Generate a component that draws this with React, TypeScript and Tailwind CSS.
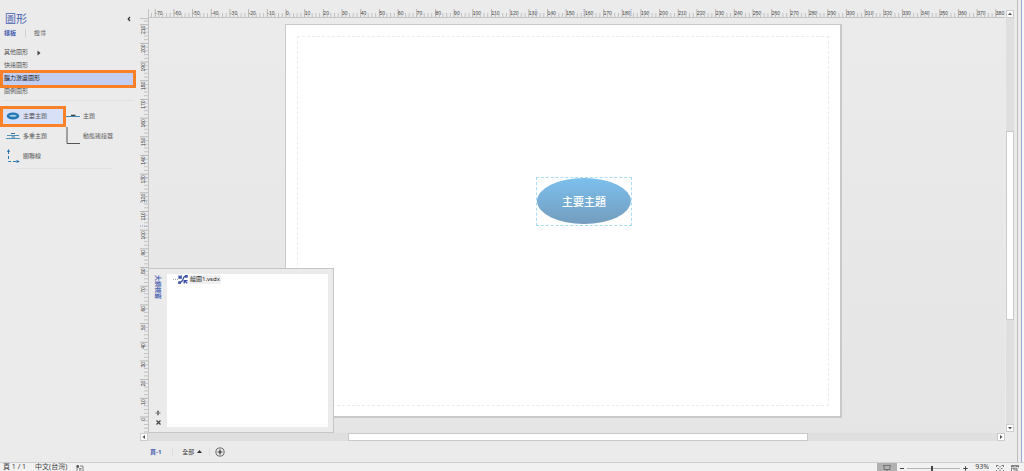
import React from "react";

const STEP = 18.68;

type RulerProps = { origin: number; from: number; to: number; marks: number[] };

function HorizontalRuler({ origin, from, to, marks }: RulerProps) {
  const ticks: React.ReactNode[] = [];
  for (let v = from; v <= to; v += 2) {
    const x = origin + (v / 10) * STEP;
    const major = v % 10 === 0;
    ticks.push(
      <line key={v} x1={x} x2={x} y1={major ? 0 : 4} y2={8} stroke={major ? "#b4b4b4" : "#c2c2c2"} />
    );
    if (major) {
      ticks.push(
        <text key={"t" + v} x={x} y={6} fontSize={5} fill="#3c3c3c">
          {v}
        </text>
      );
    }
  }
  return (
    <svg className="block h-[10px] w-full overflow-hidden font-['Liberation_Sans',sans-serif]" aria-hidden="true">
      {ticks}
      {marks.map((m) => (
        <line key={m} x1={m} x2={m} y1={0} y2={8} stroke="#8f9ccc" strokeDasharray="1 1" />
      ))}
      <line x1="0" x2="100%" y1="8.5" y2="8.5" stroke="#c4c4c4" />
    </svg>
  );
}

function VerticalRuler({ origin, from, to, marks }: RulerProps) {
  const ticks: React.ReactNode[] = [];
  for (let v = from; v <= to; v += 2) {
    const y = origin - (v / 10) * STEP;
    const major = v % 10 === 0;
    ticks.push(
      <line key={v} x1={major ? 0 : 4} x2={8} y1={y} y2={y} stroke={major ? "#b4b4b4" : "#c2c2c2"} />
    );
    if (major && v >= 0) {
      ticks.push(
        <text key={"t" + v} transform={`translate(5 ${y + 1}) rotate(-90)`} textAnchor="end" fontSize={5} fill="#3c3c3c">
          {v}
        </text>
      );
    }
  }
  return (
    <svg className="block h-full w-[9px] overflow-hidden font-['Liberation_Sans',sans-serif]" aria-hidden="true">
      {ticks}
      {marks.map((m) => (
        <line key={m} x1={0} x2={8} y1={m} y2={m} stroke="#8f9ccc" strokeDasharray="1 1" />
      ))}
      <line x1="8.5" x2="8.5" y1="0" y2="100%" stroke="#c4c4c4" />
    </svg>
  );
}

function MainTopicIcon() {
  return (
    <svg width="14" height="8" viewBox="0 0 14 8" aria-hidden="true">
      <ellipse cx="7" cy="4" rx="6.3" ry="3.5" fill="#1f78b4" />
      <ellipse cx="7" cy="3.8" rx="3.6" ry="1" fill="#a8cbe4" />
    </svg>
  );
}

function TopicIcon() {
  return (
    <svg width="14" height="8" viewBox="0 0 14 8" aria-hidden="true">
      <path d="M0 4.5H14" stroke="#3d86b5" />
      <path d="M5 3.3H9.5" stroke="#333" strokeWidth="1.2" />
    </svg>
  );
}

function MultiTopicIcon() {
  return (
    <svg width="14" height="8" viewBox="0 0 14 8" aria-hidden="true">
      <path d="M1 3.5H13M0 6.5H14" stroke="#4f93bd" />
      <path d="M5 1.5H9M5.5 5H9" stroke="#3b6f92" strokeWidth="1" />
    </svg>
  );
}

function ConnectorIcon() {
  return (
    <svg width="14" height="18" viewBox="0 0 14 18" aria-hidden="true">
      <path d="M1 0V16.5H14" fill="none" stroke="#555" />
    </svg>
  );
}

function AssociationIcon() {
  return (
    <svg width="14" height="14" viewBox="0 0 14 14" aria-hidden="true">
      <path d="M2.5 2V12.5H12" fill="none" stroke="#2b79b2" strokeDasharray="3 2" />
      <path d="M2.5 0L4 3H1ZM14 12.5L10.5 11V14Z" fill="#1f6ca8" />
    </svg>
  );
}

type Shape = { name: string; icon: React.ReactNode; selected?: boolean };

const SHAPES: Shape[] = [
  { name: "主要主題", icon: <MainTopicIcon />, selected: true },
  { name: "主題", icon: <TopicIcon /> },
  { name: "多重主題", icon: <MultiTopicIcon /> },
  { name: "動態連接器", icon: <ConnectorIcon /> },
  { name: "關聯線", icon: <AssociationIcon /> },
];

const STENCILS = ["其他圖形", "快速圖形", "腦力激盪圖形", "圖例圖形"];

function Sidebar() {
  return (
    <aside className="w-[140px] shrink-0 pt-3 text-[6px] text-[#555]">
      <div className="flex h-[13px] items-center justify-between pr-[9px] pl-[5px]">
        <h1 className="text-[11px] leading-[13px] text-[#4a62b0]">圖形</h1>
        <button aria-label="收合">
          <svg width="4" height="6" viewBox="0 0 4 6" aria-hidden="true">
            <path d="M3 1L1.2 3L3 5" fill="none" stroke="#333" strokeWidth="1.2" />
          </svg>
        </button>
      </div>
      <div className="mt-[2px] flex h-3 items-center pl-1 leading-3">
        <button className="font-bold text-[#4a62b0]">樣板</button>
        <span className="mr-2 ml-[9px] h-[8px] w-px bg-[#cfcfcf]" />
        <button>搜尋</button>
      </div>
      <ul className="mt-[7px]">
        {STENCILS.map((name, i) => (
          <li key={name} className={i === 2 ? "relative z-10" : ""}>
            <button
              className={
                i === 2
                  ? "flex h-[13px] w-[134px] items-center bg-[#c3cff2] pl-1 text-[#222]"
                  : "flex h-[13px] w-full items-center pl-1"
              }
            >
              {name}
              {i === 0 && (
                <svg className="ml-[9px]" width="4" height="6" viewBox="0 0 4 6" aria-hidden="true">
                  <path d="M0.5 0.5L3.5 3L0.5 5.5Z" fill="#444" />
                </svg>
              )}
            </button>
            {i === 2 && (
              <span className="pointer-events-none absolute -top-[2px] right-[4px] -bottom-[3px] left-0 border-3 border-[#fb8128]" />
            )}
          </li>
        ))}
      </ul>
      <hr className="mt-[2px] mr-[7px] ml-1 border-[#e0e0e0]" />
      <ul className="mt-[5px] grid grid-cols-[60px_1fr]">
        {SHAPES.map((s) => (
          <li key={s.name} className="relative h-5">
            <button
              className={
                s.selected
                  ? "flex h-5 w-[64px] items-center gap-[3px] bg-[#d8e0f8] pl-[6px]"
                  : "flex h-5 w-full items-center gap-[3px] pl-[6px]"
              }
            >
              <span className="flex w-[14px] justify-center">{s.icon}</span>
              {s.name}
            </button>
            {s.selected && (
              <span className="pointer-events-none absolute top-0 -right-[6px] -bottom-px left-0 border-3 border-[#fb8128]" />
            )}
          </li>
        ))}
      </ul>
      <hr className="mt-[2px] mr-7 ml-4 border-[#e3e3e3]" />
    </aside>
  );
}

function ArrowButton({ label, path }: { label: string; path: string }) {
  return (
    <button
      aria-label={label}
      className="flex size-[8px] shrink-0 items-center justify-center border border-[#cccccc] bg-white"
    >
      <svg width="4" height="4" viewBox="0 0 4 4" aria-hidden="true">
        <path d={path} fill="#555" />
      </svg>
    </button>
  );
}

function OutlineWindow() {
  return (
    <section className="absolute bottom-0 -left-px flex h-[165px] w-[186px] border border-[#c6c6c6] bg-[#ebebeb] py-[5px] pr-[5px]">
      <div className="flex w-[18px] flex-col items-center pt-px pb-[2px]">
        <h2 className="text-[6px] leading-[8px] font-bold text-[#4a62b0] [text-orientation:sideways] [writing-mode:vertical-rl]">
          大綱視窗
        </h2>
        <button aria-label="固定" className="mt-auto">
          <svg width="6" height="6" viewBox="0 0 6 6" aria-hidden="true">
            <path d="M0.5 3H5.5M3 0.5V5.5M2 1.5H4M2 4H4" stroke="#555" strokeWidth="0.8" />
          </svg>
        </button>
        <button aria-label="關閉" className="mt-1">
          <svg width="5" height="5" viewBox="0 0 5 5" aria-hidden="true">
            <path d="M0.5 0.5L4.5 4.5M4.5 0.5L0.5 4.5" stroke="#444" strokeWidth="1.2" />
          </svg>
        </button>
      </div>
      <div className="flex-1 bg-white pl-[6px]">
        <div className="flex h-[10px] items-center">
          <span className="w-[5px] border-t border-dotted border-[#aaa]" />
          <svg width="10" height="9" viewBox="0 0 10 9" aria-hidden="true">
            <path
              d="M0.5 0.8L3.2 3.2M0.3 3H3.2V0.3M8.5 0.5C6.5 0.8 5.5 2 5 4.2C4.3 6.5 3.2 7.6 1 8.3M6 5.5L9.3 8.3M6.2 8.6V5.7H9.5"
              stroke="#3b4fa5"
              strokeWidth="1.3"
              fill="none"
            />
            <path d="M7 0H9.8V2.8H7ZM0.2 6.3H2.8V8.9H0.2Z" fill="#4357ab" />
          </svg>
          <span className="ml-px bg-[#f1f1f1] px-px text-[6px] leading-[9px] text-[#222]">繪圖1.vsdx</span>
        </div>
      </div>
    </section>
  );
}

function Canvas() {
  return (
    <div className="relative overflow-hidden bg-linear-to-b from-[#ebebeb] to-[#e5e5e5]">
      <div className="absolute top-[5px] left-[136px] h-[394px] w-[557px] border border-r-2 border-b-2 border-[#c9c9c9] bg-white">
        <div className="absolute top-[11px] right-[11px] bottom-[10px] left-[11px] border border-dashed border-[#ececec]" />
        <div className="absolute top-[152px] left-[250px] h-[49px] w-[96px] border border-dashed border-[#a9dcf5]">
          <div className="flex h-[46px] w-[94px] items-center justify-center rounded-[50%] bg-linear-to-b from-[#7cc0ed] to-[#739dbe] text-[11px] leading-none font-medium text-white">
            主要主題
          </div>
        </div>
      </div>
      <OutlineWindow />
    </div>
  );
}

function HorizontalScrollbar() {
  return (
    <div className="flex h-[8px] bg-[#dfdfdf]">
      <ArrowButton label="向左捲動" path="M3 0V4L0.5 2Z" />
      <span className="flex-[200]" />
      <span className="flex-[460] border border-[#c9c9c9] bg-white" />
      <span className="flex-[189]" />
      <ArrowButton label="向右捲動" path="M1 0V4L3.5 2Z" />
    </div>
  );
}

function PageTabs() {
  return (
    <nav className="flex h-[21px] items-center pl-[10px] text-[6px] leading-3 text-[#444]">
      <button className="font-bold text-[#4a62b0]">頁-1</button>
      <span className="mr-[9px] ml-[11px] h-[8px] w-px bg-[#dedede]" />
      <button className="flex items-center gap-[3px]">
        全部
        <svg width="5" height="3" viewBox="0 0 5 3" aria-hidden="true">
          <path d="M0 3L2.5 0L5 3Z" fill="#333" />
        </svg>
      </button>
      <span className="mr-[5px] ml-[7px] h-[8px] w-px bg-[#dedede]" />
      <button aria-label="新增頁面">
        <svg width="10" height="10" viewBox="0 0 10 10" aria-hidden="true">
          <circle cx="5" cy="5" r="4.1" fill="none" stroke="#555" strokeWidth="0.9" />
          <path d="M5 2.6V7.4M2.6 5H7.4" stroke="#333" strokeWidth="1.2" />
        </svg>
      </button>
    </nav>
  );
}

function StatusBar() {
  return (
    <footer className="flex h-[9px] shrink-0 items-start overflow-hidden border-t border-[#cfcfcf] bg-[#f1f1f1] pl-[3px] text-[7px] leading-[8px] text-[#444]">
      <span>頁 1 / 1</span>
      <span className="ml-[9px]">中文(台灣)</span>
      <button aria-label="巨集錄製" className="mt-[2px] ml-[9px]">
        <svg width="8" height="7" viewBox="0 0 8 7" aria-hidden="true">
          <path d="M1 2.5V6.5H7V1H4M3 3.5H5.5M3 5H5.5" fill="none" stroke="#666" strokeWidth="0.8" />
          <circle cx="1.7" cy="1.5" r="1.4" fill="#555" />
        </svg>
      </button>
      <button aria-label="簡報模式" className="ml-auto flex h-[9px] w-5 justify-center bg-[#b1b1b1] pt-[2px]">
        <svg width="8" height="7" viewBox="0 0 8 7" aria-hidden="true">
          <path d="M0 0.5H8M1 0.5V4.5H7V0.5M4 4.5V6M2.5 6.5H5.5" fill="none" stroke="#666" strokeWidth="0.8" />
        </svg>
      </button>
      <button aria-label="縮小" className="mt-[5px] ml-[3px] h-px w-1 bg-[#444]" />
      <input
        type="range"
        aria-label="顯示比例"
        min={0}
        max={100}
        defaultValue={47}
        className="mt-[2px] mr-[3px] ml-[3px] h-[7px] w-[53px] appearance-none bg-[linear-gradient(#b5b5b5,#b5b5b5)] bg-[length:100%_1px] bg-center bg-no-repeat [&::-webkit-slider-thumb]:h-[6px] [&::-webkit-slider-thumb]:w-[2px] [&::-webkit-slider-thumb]:appearance-none [&::-webkit-slider-thumb]:bg-[#444]"
      />
      <button aria-label="放大" className="mt-[3px]">
        <svg width="5" height="5" viewBox="0 0 5 5" aria-hidden="true">
          <path d="M2.5 0.3V4.7M0.3 2.5H4.7" stroke="#444" />
        </svg>
      </button>
      <span className="ml-[7px]">93%</span>
      <button aria-label="調整成視窗大小" className="mt-[2px] ml-[7px]">
        <svg width="8" height="7" viewBox="0 0 8 7" aria-hidden="true">
          <path d="M0.5 2V0.5H2.5M5.5 0.5H7.5V2M7.5 5V6.5H5.5M2.5 6.5H0.5V5M4 1V2.5M4 4.5V6M1.5 3.5H3M5 3.5H6.5" fill="none" stroke="#666" strokeWidth="0.9" />
        </svg>
      </button>
      <button aria-label="切換視窗" className="mt-[2px] mr-[5px] ml-[7px]">
        <svg width="8" height="7" viewBox="0 0 8 7" aria-hidden="true">
          <path d="M0.5 2.5V0.5H7.5V2.5M0.5 1.5H3.5M4.5 1.5H7.5M0.5 3.2H6V6.5H0.5ZM3 3.2V5H6" fill="none" stroke="#666" strokeWidth="0.8" />
        </svg>
      </button>
    </footer>
  );
}

export default function App() {
  return (
    <div className="flex h-screen flex-col overflow-hidden bg-[#ebebeb] font-['Noto_Sans','Noto_Sans_CJK_TC',sans-serif]">
      <div className="flex min-h-0 flex-1">
        <Sidebar />
        <main className="flex min-w-0 flex-1 flex-col pt-[9px]">
          <div className="grid min-h-0 flex-1 grid-cols-[9px_minmax(0,1fr)] grid-rows-[10px_minmax(0,1fr)]">
            <span className="border-r border-b border-[#c4c4c4]" />
            <HorizontalRuler origin={137} from={-72} to={380} marks={[387, 435, 482]} />
            <VerticalRuler origin={398} from={-8} to={212} marks={[159, 183, 207]} />
            <Canvas />
          </div>
          <HorizontalScrollbar />
          <PageTabs />
        </main>
        <div className="ml-px flex w-[8px] flex-col bg-[#ebebeb] pt-[10px] pb-[30px]">
          <ArrowButton label="向上捲動" path="M0 3H4L2 0.5Z" />
          <span className="flex-[114] bg-[#dfdfdf]" />
          <span className="flex-[187] border border-[#c9c9c9] bg-white" />
          <span className="flex-[105] bg-[#dfdfdf]" />
          <ArrowButton label="向下捲動" path="M0 1H4L2 3.5Z" />
        </div>
        <div className="ml-[3px] flex w-[7px] border-l border-[#bdbdbd] bg-[#ececec]">
          <span className="ml-[3px] w-px bg-[#9aa6cf]" />
          <span className="flex-1 bg-[#f6f7fb]" />
        </div>
      </div>
      <StatusBar />
    </div>
  );
}
